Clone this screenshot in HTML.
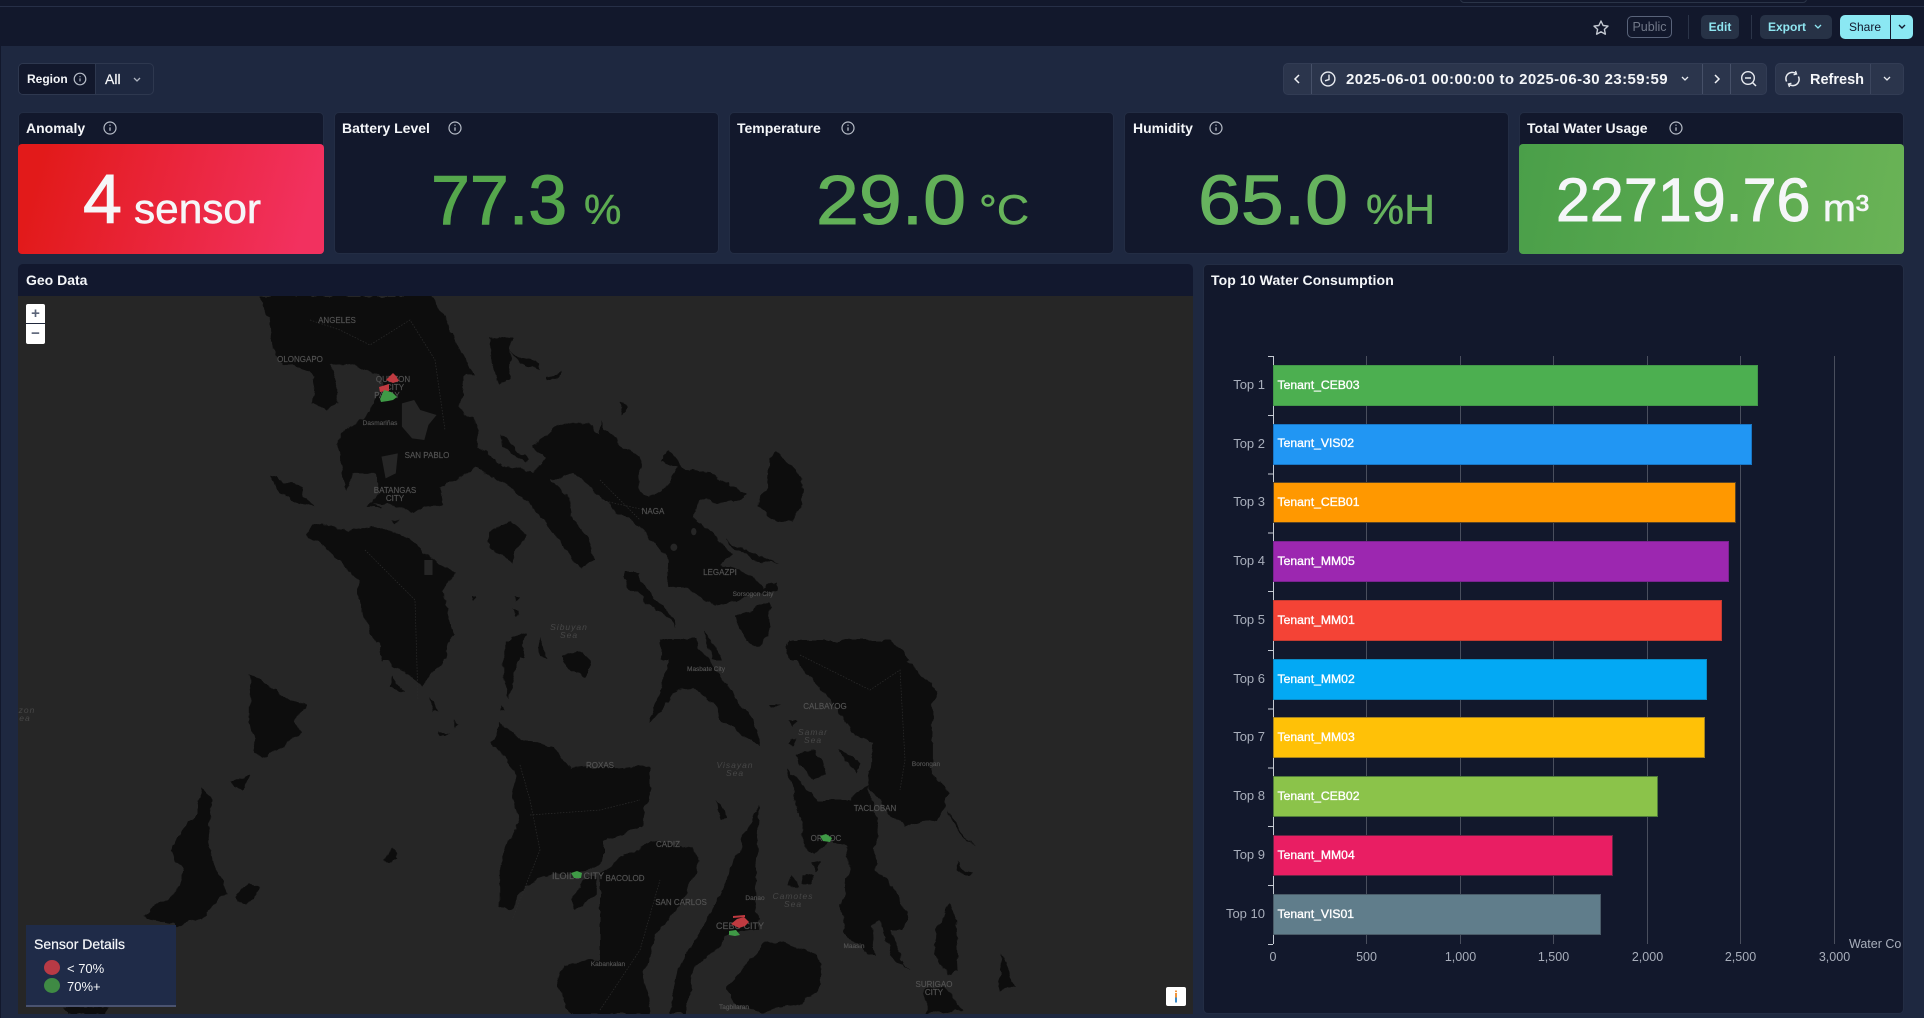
<!DOCTYPE html>
<html lang="en">
<head>
<meta charset="utf-8">
<title>Dashboard</title>
<style>
*{box-sizing:border-box}
html,body{margin:0;padding:0;width:1924px;height:1018px;overflow:hidden;background:#1e2840;font-family:"Liberation Sans",sans-serif;color:#fff}
.a{position:absolute}
.topbar{left:0;top:0;width:1924px;height:46px;background:#12182c}
.topline{left:0;top:6px;width:1924px;height:1px;background:#262f47}
.crumb{left:1460px;top:-6px;width:347px;height:9px;border:1px solid #2a3448;border-radius:4px;background:#12182c}
.leftedge{left:0;top:0;width:1px;height:1018px;background:#12182c}
.vsep{width:1px;background:#2b3448}
.btn{height:24px;top:15px;background:#273246;border-radius:5px;font-size:12px;font-weight:bold;line-height:24px;color:#8fe6f1;text-align:center}
.panel{background:#12182c;border:1px solid #232d44;border-radius:5px}
.ctl{background:#2b354c;border:1px solid #323c54;border-radius:5px}
.t{position:absolute;white-space:nowrap;font-size:14px;font-weight:bold;line-height:18px;color:#f4f6f9}
.fill{position:absolute;left:18px;top:144px;border-radius:4px}
svg{position:absolute;display:block}
svg text{font-family:"Liberation Sans",sans-serif}
</style>
</head>
<body>
<div class="a leftedge"></div>
<div class="a topbar"></div>
<div class="a crumb"></div>
<div class="a topline"></div>

<!-- header actions -->
<svg style="left:1592px;top:19px" width="18" height="18" viewBox="0 0 18 18"><path d="M9 2l2.1 4.5 4.9.6-3.6 3.3 1 4.8L9 12.8l-4.4 2.4 1-4.8L2 7.1l4.9-.6z" fill="none" stroke="#c4c9d2" stroke-width="1.4" stroke-linejoin="round"/></svg>
<div class="a" style="left:1627px;top:16px;width:45px;height:22px;border:1px solid #59637a;border-radius:5px;font-size:12.5px;line-height:20px;text-align:center;color:#717888">Public</div>
<div class="a vsep" style="left:1688px;top:15px;height:24px"></div>
<div class="a btn" style="left:1701px;width:38px">Edit</div>
<div class="a vsep" style="left:1751px;top:15px;height:24px"></div>
<div class="a btn" style="left:1760px;width:72px;text-align:left;padding-left:8px">Export</div>
<svg style="left:1812px;top:24px" width="12" height="6" viewBox="0 0 12 6"><path d="M3 1l3 3 3-3" fill="none" stroke="#8fe6f1" stroke-width="1.3"/></svg>
<div class="a btn" style="left:1840px;width:50px;background:#8be8f3;color:#12182c;font-weight:normal;border-radius:5px 0 0 5px">Share</div>
<div class="a" style="left:1891px;top:15px;width:22px;height:24px;background:#8be8f3;border-radius:0 5px 5px 0"></div>
<svg style="left:1896px;top:24px" width="12" height="6" viewBox="0 0 12 6"><path d="M3 1l3 3 3-3" fill="none" stroke="#12182c" stroke-width="1.4"/></svg>

<!-- region filter -->
<div class="a" style="left:18px;top:63px;width:136px;height:32px;border:1px solid #2e384f;border-radius:5px;background:#1e2840"></div>
<div class="a" style="left:19px;top:64px;width:77px;height:30px;background:#12182c;border-radius:4px 0 0 4px;border-right:1px solid #2e384f"></div>
<div class="t" style="left:27px;top:70px;font-size:12px">Region</div>
<svg style="left:73px;top:72px" width="14" height="14" viewBox="0 0 14 14"><circle cx="7" cy="7" r="5.8" fill="none" stroke="#b6bcc7" stroke-width="1.2"/><path d="M7 6.4v3M7 4.2v1" stroke="#b6bcc7" stroke-width="1.2"/></svg>
<div class="t" style="left:105px;top:70px;font-weight:normal;-webkit-text-stroke:.2px #fff">All</div>
<svg style="left:131px;top:77px" width="12" height="6" viewBox="0 0 12 6"><path d="M3 1l3 3 3-3" fill="none" stroke="#aeb4c0" stroke-width="1.3"/></svg>

<!-- time picker -->
<div class="a ctl" style="left:1283px;top:63px;width:484px;height:32px"></div>
<div class="a vsep" style="left:1311px;top:64px;height:30px;background:#465068"></div>
<div class="a vsep" style="left:1702px;top:64px;height:30px;background:#465068"></div>
<div class="a vsep" style="left:1730px;top:64px;height:30px;background:#465068"></div>
<svg style="left:1291px;top:73px" width="12" height="12" viewBox="0 0 12 12"><path d="M8 2L4 6l4 4" fill="none" stroke="#f0f2f6" stroke-width="1.5"/></svg>
<svg style="left:1320px;top:71px" width="16" height="16" viewBox="0 0 16 16"><circle cx="8" cy="8" r="6.9" fill="none" stroke="#e8ebf0" stroke-width="1.4"/><path d="M9 3.6V8.6L5 9.8" fill="none" stroke="#e8ebf0" stroke-width="1.4"/></svg>
<div class="t" style="left:1346px;top:71px;font-size:15px;letter-spacing:.42px">2025-06-01 00:00:00 to 2025-06-30 23:59:59</div>
<svg style="left:1679px;top:76px" width="12" height="6" viewBox="0 0 12 6"><path d="M3 1l3 3 3-3" fill="none" stroke="#e8ebf0" stroke-width="1.3"/></svg>
<svg style="left:1711px;top:73px" width="12" height="12" viewBox="0 0 12 12"><path d="M4 2l4 4-4 4" fill="none" stroke="#f0f2f6" stroke-width="1.5"/></svg>
<svg style="left:1740px;top:70px" width="18" height="18" viewBox="0 0 18 18"><circle cx="8" cy="8" r="6.3" fill="none" stroke="#e8ebf0" stroke-width="1.4"/><path d="M5 8h6M12.6 12.6L16 16" fill="none" stroke="#e8ebf0" stroke-width="1.5"/></svg>

<!-- refresh -->
<div class="a ctl" style="left:1775px;top:63px;width:129px;height:32px"></div>
<div class="a vsep" style="left:1870px;top:64px;height:30px;background:#3c465e"></div>
<svg style="left:1784px;top:70px" width="17" height="18" viewBox="0 0 17 18"><path d="M2.6 11.5A6.6 6.6 0 0 1 3 5 6.6 6.6 0 0 1 12 3.6M14.4 6.5A6.6 6.6 0 0 1 14 13 6.6 6.6 0 0 1 5 14.4" fill="none" stroke="#e8ebf0" stroke-width="1.5"/><path d="M11.5 1L12.6 4 9.6 4.8M5.5 17L4.4 14 7.4 13.2" fill="none" stroke="#e8ebf0" stroke-width="1.3"/></svg>
<div class="t" style="left:1810px;top:71px;font-size:14.5px">Refresh</div>
<svg style="left:1881px;top:76px" width="12" height="6" viewBox="0 0 12 6"><path d="M3 1l3 3 3-3" fill="none" stroke="#e8ebf0" stroke-width="1.3"/></svg>

<!-- stat panels -->
<div class="a panel" style="left:18px;top:112px;width:306px;height:142px"></div>
<div class="a panel" style="left:334px;top:112px;width:385px;height:142px"></div>
<div class="a panel" style="left:729px;top:112px;width:385px;height:142px"></div>
<div class="a panel" style="left:1124px;top:112px;width:385px;height:142px"></div>
<div class="a panel" style="left:1519px;top:112px;width:385px;height:142px"></div>
<div class="fill" style="left:18px;width:306px;height:110px;background:linear-gradient(105deg,#e21a1a 8%,#f2315f 92%)"></div>
<div class="fill" style="left:1519px;width:385px;height:110px;background:linear-gradient(100deg,#4a9f49,#6ab356)"></div>
<div class="t" style="left:26px;top:119px">Anomaly</div>
<div class="t" style="left:342px;top:119px">Battery Level</div>
<div class="t" style="left:737px;top:119px">Temperature</div>
<div class="t" style="left:1133px;top:119px">Humidity</div>
<div class="t" style="left:1527px;top:119px">Total Water Usage</div>

<svg style="left:0;top:100px" width="1924" height="160" viewBox="0 100 1924 160">
<defs>
<g id="inf"><circle r="6" fill="none" stroke="#b6bcc7" stroke-width="1.2"/><path d="M0-.6v3.4M0-3.4v1.2" stroke="#b6bcc7" stroke-width="1.3"/></g>
</defs>
<use href="#inf" x="110" y="128"/><use href="#inf" x="455" y="128"/><use href="#inf" x="848" y="128"/><use href="#inf" x="1216" y="128"/><use href="#inf" x="1676" y="128"/>
<text x="83" y="223" font-size="70" fill="#f5f6f8" stroke="#f5f6f8" stroke-width="1">4</text>
<text x="134" y="223" font-size="42" fill="#f5f6f8" stroke="#f5f6f8" stroke-width=".6" textLength="127" lengthAdjust="spacingAndGlyphs">sensor</text>
<text x="431" y="224" font-size="70" fill="#55a74c" stroke="#55a74c" stroke-width="1">77.3</text>
<text x="584" y="224" font-size="42" fill="#5cab51" stroke="#5cab51" stroke-width=".5">%</text>
<text x="816" y="224" font-size="70" fill="#62b058" stroke="#62b058" stroke-width="1" textLength="150" lengthAdjust="spacingAndGlyphs">29.0</text>
<text x="979" y="224" font-size="42" fill="#66b25a" stroke="#66b25a" stroke-width=".5" textLength="50" lengthAdjust="spacingAndGlyphs">°C</text>
<text x="1198" y="224" font-size="70" fill="#66b35e" stroke="#66b35e" stroke-width="1" textLength="150" lengthAdjust="spacingAndGlyphs">65.0</text>
<text x="1366" y="224" font-size="42" fill="#66b35e" stroke="#66b35e" stroke-width=".5" textLength="69" lengthAdjust="spacingAndGlyphs">%H</text>
<text x="1556" y="221" font-size="61" fill="#f5f6f8" stroke="#f5f6f8" stroke-width="1">22719.76</text>
<text x="1823" y="221" font-size="38" fill="#f5f6f8" stroke="#f5f6f8" stroke-width=".6" textLength="46" lengthAdjust="spacingAndGlyphs">m³</text>
</svg>

<!-- geo panel -->
<div class="a" style="left:18px;top:264px;width:1175px;height:750px;background:#12182e;border-radius:5px 5px 0 0"></div>
<div class="t" style="left:26px;top:271px">Geo Data</div>

<svg style="left:18px;top:296px" width="1175" height="718" viewBox="18 296 1175 718">
<defs>
<filter id="coast" filterUnits="userSpaceOnUse" x="18" y="296" width="1175" height="718">
<feTurbulence type="fractalNoise" baseFrequency="0.07" numOctaves="3" seed="4" result="n"/>
<feDisplacementMap in="SourceGraphic" in2="n" scale="9" xChannelSelector="R" yChannelSelector="G"/>
</filter>
</defs>
<rect x="18" y="296" width="1175" height="718" fill="#262626"/>
<g fill="#0a0a0a" filter="url(#coast)">
<g transform="translate(0,260) scale(.408,.3333)">
<path d="M640 108L660 180 670 265 690 315 735 320 770 350 765 430 800 450 830 435 830 390 812 315 860 310 905 335 925 345 940 385 920 430 885 480 840 515 825 560 840 640 848 692 870 640 925 640 930 690 905 735 960 735 1010 760 1085 730 1080 680 1170 625 1210 650 1290 720 1340 790 1400 890 1425 925 1455 900 1450 850 1400 770 1395 710 1350 660 1410 640 1490 730 1568 800 1568 590 1480 530 1440 490 1370 490 1340 530 1300 560 1340 590 1310 640 1225 610 1170 560 1170 500 1130 440 1135 350 1165 345 1130 280 1090 170 1060 108Z"/>
<path d="M745 820L770 790 850 810 920 800 1000 830 1060 900 1115 940 1085 1000 1115 1130 1060 1200 940 1200 925 1150 880 1050 880 960 800 860Z"/>
<path d="M660 650L700 670 745 680 740 710 775 745 730 730 680 700Z"/>
<path d="M1195 820L1250 780 1290 830 1250 910 1195 850Z"/>
<path d="M1195 225L1255 235 1250 360 1222 372 1205 300Z"/>
<path d="M1255 280L1320 310 1320 335 1270 300Z"/>
<path d="M1340 348L1375 340 1375 350 1340 356Z"/>
<path d="M1225 525L1300 600 1290 610 1230 560Z"/>
<path d="M1250 1130L1290 1120 1280 1200 1245 1200Z"/>
<path d="M1320 1130L1345 1190 1325 1190Z"/>
<path d="M1375 1195L1410 1175 1450 1200Z"/>
<path d="M1155 1010L1168 1012 1160 1025Z"/>
<path d="M1260 1005L1275 1005 1268 1022Z"/>
<path d="M1258 1050L1272 1050 1265 1068Z"/>
<path d="M905 730L930 745 930 750 900 742Z"/>
<path d="M965 775L980 780 970 790Z"/>
<path d="M1530 935L1568 940 1568 998 1530 960Z"/>
</g>
<g transform="translate(600,260) scale(.3827,.3333)">
<path d="M0 490L60 560 105 630 100 690 130 712 180 680 205 620 155 605 180 565 225 630 290 640 385 710 350 725 260 720 245 770 300 830 345 885 320 910 400 950 430 985 455 960 460 990 420 1000 350 1020 300 1040 230 990 175 980 180 900 150 860 100 790 30 750 0 680Z"/>
<path d="M462 575L525 650 530 730 505 780 460 790 408 735 435 680 440 600Z"/>
<path d="M330 840L380 875 465 910 420 905 350 870Z"/>
<path d="M60 935L100 940 140 1020 170 1040 200 1100 150 1050 70 980Z"/>
<path d="M270 1105L325 1200 295 1200Z"/>
<path d="M350 1070L440 1030 445 1130 420 1160 380 1140Z"/>
<path d="M485 1150L650 1160 720 1140 790 1170 810 1200 490 1200Z"/>
<path d="M160 1140L260 1190 260 1200 160 1200Z"/>
<path d="M50 430L70 440 60 470Z"/>
</g>
<g transform="translate(600,640) scale(.3827,.3333)">
<path d="M155 0L185 40 130 250 210 145 240 140 300 190 320 240 420 320 400 240 330 130 270 40 250 0Z"/>
<path d="M490 10L500 0 760 0 810 70 880 150 870 200 870 400 915 460 880 540 790 560 750 510 700 440 715 310 660 280 620 200 540 100Z"/>
<path d="M490 390L530 430 570 480 650 480 700 440 725 540 720 690 770 740 800 830 790 870 760 870 790 970 810 990 760 950 730 840 710 860 720 950 690 930 640 880 630 800 650 700 640 620 600 600 560 640 530 620 520 520Z"/>
<path d="M510 340L560 335 595 400 560 420 520 370Z"/>
<path d="M415 490L410 650 405 780 415 870 340 880 300 930 240 1000 225 1122 180 1122 210 970 290 820 330 720 380 580Z"/>
<path d="M0 700L70 640 140 600 245 625 260 660 220 780 160 860 110 1000 130 1122 0 1122Z"/>
<path d="M330 1040L380 980 430 910 480 905 560 940 580 970 570 1060 500 1100 420 1115 350 1090Z"/>
<path d="M0 380L50 390 130 380 130 440 110 560 40 570 0 610Z"/>
<path d="M915 790L930 830 935 990 905 1000 870 920 880 860Z"/>
<path d="M1050 945L1085 1040 1040 1050Z"/>
<path d="M850 1050L900 1040 950 1110 850 1122Z"/>
<path d="M930 660L945 690 975 700 960 710 930 690Z"/>
<path d="M905 510L980 620 930 560Z"/>
<path d="M490 740L500 700 520 740Z"/>
<path d="M525 710L560 705 555 730 530 730Z"/>
<path d="M305 485L335 535 310 540Z"/>
<path d="M380 0L430 0 420 20Z"/>
<path d="M440 195L470 195 450 205Z"/>
<path d="M490 240L510 240 500 260Z"/>
<path d="M490 295L510 295 505 310 490 308Z"/>
<path d="M630 330L680 370 670 400 640 370Z"/>
<path d="M555 670L580 665 565 695Z"/>
</g>
<g transform="translate(0,640) scale(.408,.3333)">
<path d="M930 0L1100 0 1085 70 1030 130 980 90 960 80Z"/>
<path d="M1235 0L1285 0 1260 100 1250 180 1235 130Z"/>
<path d="M1320 0L1345 40 1325 40Z"/>
<path d="M1375 50L1420 35 1450 60 1435 115 1395 90Z"/>
<path d="M960 110L990 160 955 140Z"/>
<path d="M1055 170L1075 220 1060 220Z"/>
<path d="M1110 240L1122 260 1110 260Z"/>
<path d="M1075 272L1105 280 1080 285Z"/>
<path d="M1225 190L1237 205 1225 208Z"/>
<path d="M960 630L975 650 955 668 940 660Z"/>
<path d="M610 100L650 130 700 170 750 200 720 240 740 280 650 350 630 340 610 240Z"/>
<path d="M495 440L520 470 510 600 525 670 555 760 500 830 430 860 350 830 430 760 450 690 420 640 440 580 480 520Z"/>
<path d="M575 770L610 730 645 745 600 800Z"/>
<path d="M155 1100L270 1100 255 1122 165 1122Z"/>
<path d="M565 425L610 410 595 450Z"/>
<path d="M1205 305L1225 250 1280 300 1360 320 1400 390 1500 380 1525 410 1568 400 1568 560 1480 610 1480 650 1450 690 1400 700 1350 700 1290 740 1250 810 1225 800 1225 680 1270 540 1255 470 1265 400Z"/>
<path d="M1400 780L1430 720 1460 710 1460 770 1410 810Z"/>
<path d="M1530 640L1568 620 1568 1122 1400 1122 1365 1040 1380 975 1500 960 1530 850 1490 770 1530 740Z"/>
</g>
</g>
<!-- lakes -->
<g fill="#262626">
<g transform="translate(0,260) scale(.408,.3333)">
<path d="M985 430L1015 420 1030 450 1070 465 1050 495 1040 540 1010 535 985 500Z"/>
<path d="M935 590L975 580 970 640 945 655Z"/>
<path d="M1040 900L1060 900 1060 945 1040 945Z"/>
</g>
<g transform="translate(600,260) scale(.3827,.3333)">
<ellipse cx="193" cy="862" rx="9" ry="11"/>
<ellipse cx="245" cy="815" rx="7" ry="11"/>
</g>
</g>
<!-- borders -->
<g fill="none" stroke="#2c2c2c" stroke-width=".7" stroke-dasharray="1.5 1.5">
<path d="M310 320L340 330 370 345 410 320 435 360 445 430"/>
<path d="M365 550L415 600 418 700"/>
<path d="M600 480L640 520M600 500L645 510"/>
<path d="M520 765L530 800 540 850 512 920M530 815L600 810 640 800"/>
<path d="M800 655L870 690 900 670 905 760 900 790"/>
<path d="M600 1010L640 950 660 880"/>
</g>
<!-- labels -->
<g font-size="8" fill="#545454" stroke="#545454" stroke-width=".15" text-anchor="middle">
<text x="337" y="323">ANGELES</text>
<text x="300" y="362">OLONGAPO</text>
<text x="393" y="382">QUEZON</text>
<text x="395" y="390">CITY</text>
<text x="387" y="398">PASAY</text>
<text x="380" y="425" font-size="6.5">Dasmariñas</text>
<text x="427" y="458">SAN PABLO</text>
<text x="395" y="493">BATANGAS</text>
<text x="395" y="501">CITY</text>
<text x="653" y="514">NAGA</text>
<text x="720" y="575">LEGAZPI</text>
<text x="753" y="596" font-size="6.5">Sorsogon City</text>
<text x="706" y="671" font-size="6.5">Masbate City</text>
<text x="825" y="709">CALBAYOG</text>
<text x="926" y="766" font-size="6.5">Borongan</text>
<text x="875" y="811">TACLOBAN</text>
<text x="826" y="841">ORMOC</text>
<text x="668" y="847">CADIZ</text>
<text x="625" y="881">BACOLOD</text>
<text x="681" y="905">SAN CARLOS</text>
<text x="755" y="900" font-size="6.5">Danao</text>
<text x="740" y="929" font-size="9">CEBU CITY</text>
<text x="854" y="948" font-size="6.5">Maasin</text>
<text x="934" y="987">SURIGAO</text>
<text x="934" y="995">CITY</text>
<text x="734" y="1009" font-size="6.5">Tagbilaran</text>
<text x="600" y="768">ROXAS</text>
<text x="578" y="879" font-size="9">ILOILO CITY</text>
<text x="608" y="966" font-size="6.5">Kabankalan</text>
</g>
<g font-size="8.5" font-style="italic" fill="#474747" text-anchor="middle" letter-spacing="1">
<text x="569" y="630">Sibuyan</text><text x="569" y="638">Sea</text>
<text x="813" y="735">Samar</text><text x="813" y="743">Sea</text>
<text x="735" y="768">Visayan</text><text x="735" y="776">Sea</text>
<text x="793" y="899">Camotes</text><text x="793" y="907">Sea</text>
<text x="27" y="713">zon</text><text x="25" y="721">ea</text>
</g>
<!-- markers -->
<g fill="#bf3a40">
<path d="M386 380L391 375 393 373 396 376 399 381 393 383Z"/>
<path d="M379 387L389 384 389 391 380 392Z"/>
<path d="M731 924L737 919 744 917 749 922 745 926 739 928Z"/>
<path d="M733 916L745 915 745 917 733 918Z"/>
</g>
<g fill="#3f9a46">
<path d="M380 399L384 390 391 392 394 394 397 397 393 400 388 401 381 402Z"/>
<path d="M571 873L577 871 582 873 581 878 574 878Z"/>
<path d="M820 836L826 834 832 838 830 842 823 841Z"/>
<path d="M729 931L736 930 740 935 735 936 729 935Z"/>
</g>
</svg>

<!-- map controls -->
<div class="a" style="left:26px;top:304px;width:19px;height:40px;background:#fff;border-radius:2px"></div>
<div class="a" style="left:26px;top:323px;width:19px;height:1px;background:#20283c"></div>
<div class="a" style="left:26px;top:304px;width:19px;height:19px;text-align:center;font-size:15px;line-height:19px;font-weight:bold;color:#5b6478">+</div>
<div class="a" style="left:26px;top:324px;width:19px;height:20px;text-align:center;font-size:15px;line-height:19px;font-weight:bold;color:#5b6478">−</div>
<div class="a" style="left:1166px;top:987px;width:20px;height:19px;background:#fff;border-radius:2px"></div>
<svg style="left:1172px;top:989px" width="8" height="15" viewBox="0 0 8 15"><rect x="3" y="1.5" width="2" height="1.6" fill="#f0943c"/><rect x="3" y="4" width="2" height="4.5" fill="#f0943c"/><rect x="3" y="8.5" width="2" height="5" fill="#3a8ac8"/></svg>

<!-- legend -->
<div class="a" style="left:26px;top:925px;width:150px;height:82px;background:#1f2b48;border-bottom:2px solid #4a5370"></div>
<div class="t" style="left:34px;top:935px;font-weight:normal;-webkit-text-stroke:.2px #fff">Sensor Details</div>
<div class="a" style="left:44px;top:960px;width:16px;height:15px;border-radius:50%;background:#b83a45"></div>
<div class="a" style="left:44px;top:978px;width:16px;height:15px;border-radius:50%;background:#3f8a44"></div>
<div class="t" style="left:67px;top:960px;font-size:13px;font-weight:normal">&lt; 70%</div>
<div class="t" style="left:67px;top:978px;font-size:13px;font-weight:normal">70%+</div>

<!-- chart panel -->
<div class="a panel" style="left:1203px;top:264px;width:701px;height:750px"></div>
<div class="t" style="left:1211px;top:271px;letter-spacing:.1px">Top 10 Water Consumption</div>
<svg style="left:1203px;top:340px" width="701" height="640" viewBox="1203 340 701 640">
<g stroke="#494e5d" stroke-width="1">
<path d="M1366.5 356V944M1460.5 356V944M1553.5 356V944M1647.5 356V944M1740.5 356V944M1834.5 356V944"/>
</g>
<g stroke="#c5cad3" stroke-width="1" fill="none">
<path d="M1273.5 356V944"/>
<path d="M1268 356.5h5M1268 415.5h5M1268 474h5M1268 533h5M1268 591.5h5M1268 650.5h5M1268 709h5M1268 768h5M1268 826.5h5M1268 885.5h5M1268 944.5h5"/>
</g>
<g stroke-width="1">
<rect x="1273.5" y="365.5" width="484" height="40" fill="#4caf50" stroke="#43984a"/>
<rect x="1273.5" y="424.5" width="478" height="40" fill="#2196f3" stroke="#1a76c4"/>
<rect x="1273.5" y="482.5" width="462" height="40" fill="#ff9800" stroke="#5a4526"/>
<rect x="1273.5" y="541.5" width="455" height="40" fill="#9c27b0" stroke="#7a2390"/>
<rect x="1273.5" y="600.5" width="448" height="40" fill="#f44336" stroke="#c53b32"/>
<rect x="1273.5" y="659.5" width="433" height="40" fill="#03a9f4" stroke="#0a8ac6"/>
<rect x="1273.5" y="717.5" width="431" height="40" fill="#ffc107" stroke="#a48320"/>
<rect x="1273.5" y="776.5" width="384" height="40" fill="#8bc34a" stroke="#4f7a3a"/>
<rect x="1273.5" y="835.5" width="339" height="40" fill="#e91e63" stroke="#6a2345"/>
<rect x="1273.5" y="894.5" width="327" height="40" fill="#607d8b" stroke="#4a5b68"/>
</g>
<g font-size="13" fill="#a8aebb" text-anchor="end">
<text x="1265" y="389">Top 1</text><text x="1265" y="448">Top 2</text><text x="1265" y="506">Top 3</text><text x="1265" y="565">Top 4</text><text x="1265" y="624">Top 5</text><text x="1265" y="683">Top 6</text><text x="1265" y="741">Top 7</text><text x="1265" y="800">Top 8</text><text x="1265" y="859">Top 9</text><text x="1265" y="918">Top 10</text>
</g>
<g font-size="12.2" fill="#fff" stroke="#fff" stroke-width=".35">
<text x="1277.5" y="389">Tenant_CEB03</text><text x="1277.5" y="447">Tenant_VIS02</text><text x="1277.5" y="506">Tenant_CEB01</text><text x="1277.5" y="565">Tenant_MM05</text><text x="1277.5" y="624">Tenant_MM01</text><text x="1277.5" y="683">Tenant_MM02</text><text x="1277.5" y="741">Tenant_MM03</text><text x="1277.5" y="800">Tenant_CEB02</text><text x="1277.5" y="859">Tenant_MM04</text><text x="1277.5" y="918">Tenant_VIS01</text>
</g>
<g font-size="12.5" fill="#a8aebb" text-anchor="middle">
<text x="1273" y="961">0</text><text x="1366.5" y="961">500</text><text x="1460.5" y="961">1,000</text><text x="1553.5" y="961">1,500</text><text x="1647.5" y="961">2,000</text><text x="1740.5" y="961">2,500</text><text x="1834.5" y="961">3,000</text>
</g>
<text x="1849" y="948" font-size="12.5" fill="#a8aebb">Water Co</text>
</svg>
</body>
</html>
